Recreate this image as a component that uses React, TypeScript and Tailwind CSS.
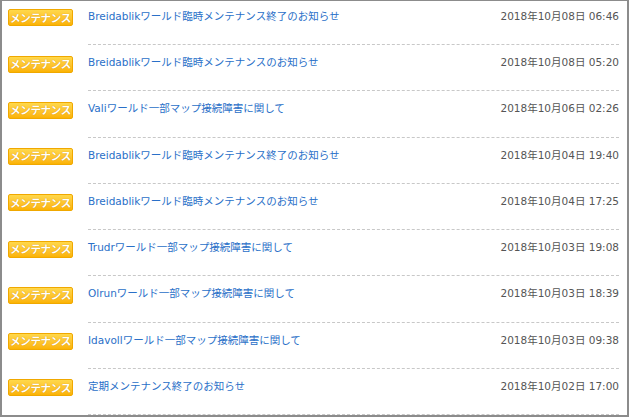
const news = [
  { title: "Breidablikワールド臨時メンテナンス終了のお知らせ", date: "2018年10月08日 06:46" },
  { title: "Breidablikワールド臨時メンテナンスのお知らせ", date: "2018年10月08日 05:20" },
  { title: "Valiワールド一部マップ接続障害に関して", date: "2018年10月06日 02:26" },
  { title: "Breidablikワールド臨時メンテナンス終了のお知らせ", date: "2018年10月04日 19:40" },
  { title: "Breidablikワールド臨時メンテナンスのお知らせ", date: "2018年10月04日 17:25" },
  { title: "Trudrワールド一部マップ接続障害に関して", date: "2018年10月03日 19:08" },
  { title: "Olrunワールド一部マップ接続障害に関して", date: "2018年10月03日 18:39" },
  { title: "Idavollワールド一部マップ接続障害に関して", date: "2018年10月03日 09:38" },
  { title: "定期メンテナンス終了のお知らせ", date: "2018年10月02日 17:00" },
];

function Badge() {
  return (
    <span className="flex h-[17px] w-[65px] items-center justify-center rounded-[2px] border border-[#f0a800] bg-gradient-to-b from-[#ffd84a] to-[#fbb300] text-[10.5px] font-bold leading-none tracking-[-0.3px] text-white [text-shadow:0_0_1px_#c98500]">
      メンテナンス
    </span>
  );
}

export default function App() {
  return (
    <div
      className="h-[417px] w-[629px] overflow-hidden border-x-2 border-t border-b-2 border-[#8c8c8c] bg-white"
      style={{ fontFamily: '"DejaVu Sans", "Noto Sans CJK JP", sans-serif' }}
    >
      <ul className="-mt-[2.25px]">
        {news.map((n, i) => (
          <li key={i} className="flex h-[46.25px]">
            <div className="w-[86px] pl-[6px] pt-[10.5px]">
              <Badge />
            </div>
            <div className="mr-[8px] flex flex-1 items-start justify-between border-b border-dashed border-[#c8c8c8] pt-[8px] text-[10.5px] leading-[18px]">
              <a className="text-[#2a70c8]">{n.title}</a>
              <span className="text-[#555]">{n.date}</span>
            </div>
          </li>
        ))}
      </ul>
    </div>
  );
}
